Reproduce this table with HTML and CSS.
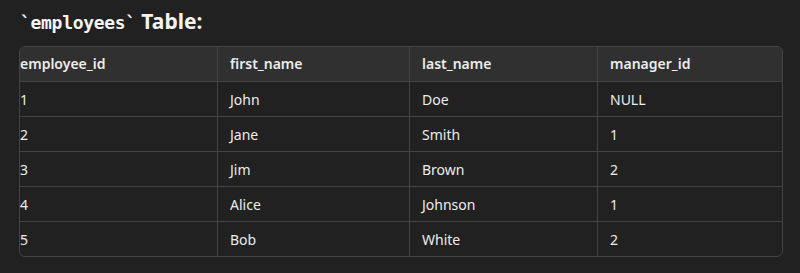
FILE: index.html
```html
<!DOCTYPE html>
<html>
<head>
<meta charset="utf-8">
<link rel="stylesheet" href="styles.css">
</head>
<body>
<div class="page">
  <h3 class="title"><code class="code">`employees`</code> Table:</h3>
  <div class="table-wrap">
    <table class="grid">
      <thead>
        <tr><th>employee_id</th><th>first_name</th><th>last_name</th><th>manager_id</th></tr>
      </thead>
      <tbody>
        <tr><td>1</td><td>John</td><td>Doe</td><td>NULL</td></tr>
        <tr><td>2</td><td>Jane</td><td>Smith</td><td>1</td></tr>
        <tr><td>3</td><td>Jim</td><td>Brown</td><td>2</td></tr>
        <tr><td>4</td><td>Alice</td><td>Johnson</td><td>1</td></tr>
        <tr><td>5</td><td>Bob</td><td>White</td><td>2</td></tr>
      </tbody>
    </table>
  </div>
</div>
</body>
</html>
```
FILE: styles.css
```css
html, body {
  margin: 0;
  padding: 0;
  background: #212121;
}
body {
  color: #ececec;
  font-family: "Noto Sans", "Open Sans", sans-serif;
  font-size: 14px;
}
.page {
  padding: 6px 18px 0 19px;
}
.title {
  margin: 0 0 0 1px;
  font-size: 21px;
  font-weight: 700;
  line-height: 30px;
  height: 31px;
  color: #f3f3f3;
}
.code {
  font-family: "DejaVu Sans Mono", monospace;
  font-size: 18px;
  font-weight: 700;
  letter-spacing: -0.3px;
}
.table-wrap {
  margin-top: 9px;
  border: 1px solid #444;
  border-radius: 6px;
  overflow: hidden;
  width: 762px;
}
.grid {
  width: 100%;
  border-collapse: collapse;
  table-layout: fixed;
}
.grid th, .grid td {
  text-align: left;
  height: 34px;
  padding: 0 12px;
  border-left: 1px solid #444;
  border-top: 1px solid #444;
  line-height: 20px;
  white-space: nowrap;
}
.grid td {
  padding-top: 2px;
  height: 32px;
}
.grid th {
  background: #303030;
  font-weight: 600;
  border-top: none;
  padding-top: 1px;
  padding-bottom: 1px;
  height: 32px;
}
.grid th:first-child, .grid td:first-child {
  border-left: none;
  padding-left: 0;
}
.grid th:nth-child(1) { width: 185px; }
.grid th:nth-child(2) { width: 167px; }
.grid th:nth-child(3) { width: 163px; }
```
